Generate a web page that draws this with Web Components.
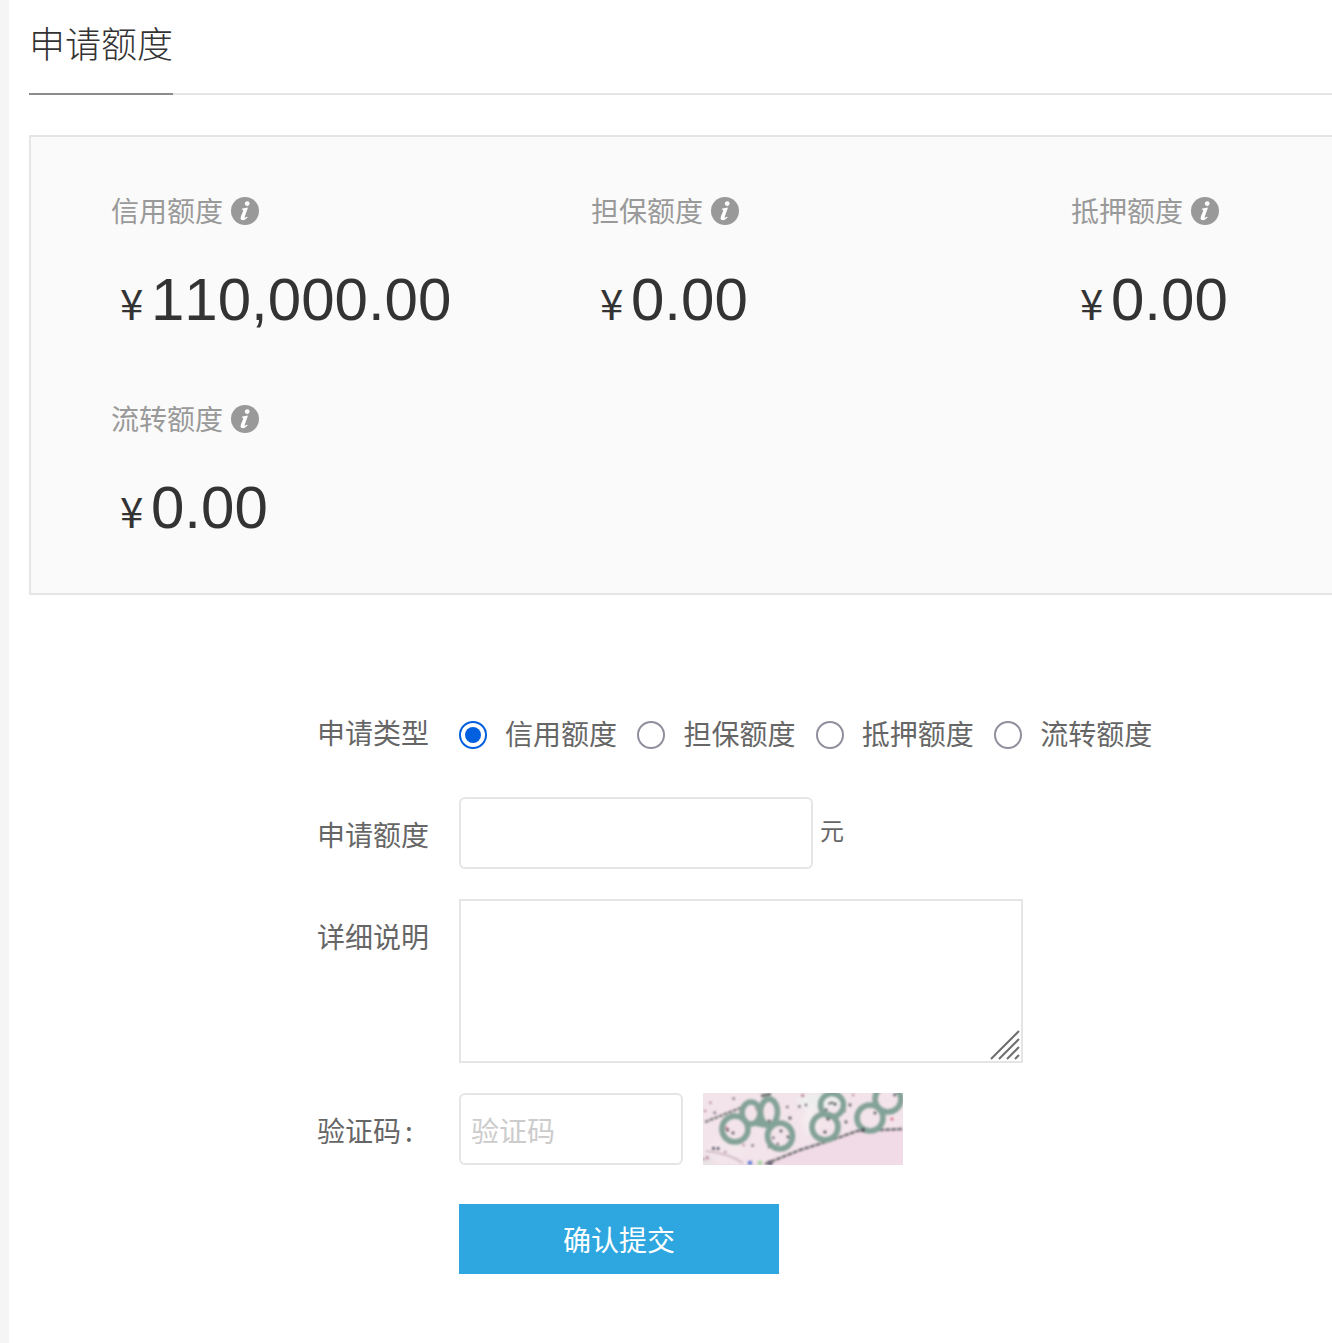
<!DOCTYPE html>
<html lang="zh-CN">
<head>
<meta charset="utf-8">
<title>申请额度</title>
<style>
    html, body { margin: 0; padding: 0; background: #fff; overflow: hidden; }
    body { font-family: "Noto Sans CJK SC", "Liberation Sans", sans-serif; }
</style>
</head>
<body>
<quota-page>
    <page-tab title="申请额度"></page-tab>
    <stat-panel>
        <stat-item label="信用额度" value="110,000.00"></stat-item>
        <stat-item label="担保额度" value="0.00"></stat-item>
        <stat-item label="抵押额度" value="0.00"></stat-item>
        <stat-item label="流转额度" value="0.00"></stat-item>
    </stat-panel>
    <apply-form></apply-form>
</quota-page>

<script>
class QuotaPage extends HTMLElement {
    constructor() {
        super();
        this.root = this.attachShadow({ mode: 'open' });
        this.root.innerHTML = /*html*/`
            <style>
                :host { display: flex; height: 1343px; overflow: hidden; }
                .strip { flex: 0 0 9px; background: #f5f5f5; }
                .main { flex: 1; min-width: 0; padding-left: 20px; overflow: hidden; }
            </style>
            <div class="strip"></div>
            <div class="main"><slot></slot></div>
        `;
    }
}
customElements.define('quota-page', QuotaPage);

class PageTab extends HTMLElement {
    constructor() {
        super();
        this.root = this.attachShadow({ mode: 'open' });
    }
    connectedCallback() {
        this.root.innerHTML = /*html*/`
            <style>
                :host { display: block; height: 95px; border-bottom: 2px solid #e5e5e5; box-sizing: border-box; }
                .tab {
                    display: inline-block;
                    height: 95px;
                    box-sizing: border-box;
                    border-bottom: 2px solid #8c8c8c;
                    font-size: 36px;
                    font-weight: 300;
                    line-height: 84px;
                    color: #333;
                    width: 144px;
                    white-space: nowrap;
                }
            </style>
            <div class="tab">${this.getAttribute('title')}</div>
        `;
    }
}
customElements.define('page-tab', PageTab);

class StatPanel extends HTMLElement {
    constructor() {
        super();
        this.root = this.attachShadow({ mode: 'open' });
        this.root.innerHTML = /*html*/`
            <style>
                :host {
                    display: grid;
                    grid-template-columns: repeat(3, 480px);
                    row-gap: 63px;
                    width: 1340px;
                    box-sizing: border-box;
                    margin-top: 40px;
                    padding: 54px 0 49px 80px;
                    background: #fafafa;
                    border: 2px solid #e5e5e5;
                }
            </style>
            <slot></slot>
        `;
    }
}
customElements.define('stat-panel', StatPanel);

class StatItem extends HTMLElement {
    constructor() {
        super();
        this.root = this.attachShadow({ mode: 'open' });
    }
    connectedCallback() {
        this.root.innerHTML = /*html*/`
            <style>
                :host { display: block; }
                .label {
                    display: flex;
                    align-items: center;
                    gap: 8px;
                    height: 40px;
                    font-size: 28px;
                    color: #999;
                }
                .label span { padding-bottom: 3px; }
                svg { width: 28px; height: 28px; display: block; }
                .value {
                    display: flex;
                    align-items: baseline;
                    height: 72px;
                    margin-top: 33px;
                    padding-left: 9px;
                    line-height: 72px;
                    color: #333;
                }
                .yen { font-size: 42px; width: 31px; }
                .num { font-family: "Liberation Sans", sans-serif; font-size: 60px; font-kerning: none; }
            </style>
            <div class="label">
                <span>${this.getAttribute('label')}</span>
                <svg viewBox="0 0 28 28">
                    <circle cx="14" cy="14" r="14" fill="#999"/>
                    <circle cx="16.2" cy="6.6" r="2.4" fill="#fff"/>
                    <path d="M11.3 11.6 L17 10.5 L13.6 20 Q13.4 21.1 14.5 20.5 L16 19.4 L16.6 20.4 Q13.5 23.6 10.6 23.1 Q9 22.6 9.7 20 L12.4 13.2 L11.2 12.9 Z" fill="#fff"/>
                </svg>
            </div>
            <div class="value"><span class="yen">¥</span><span class="num">${this.getAttribute('value')}</span></div>
        `;
    }
}
customElements.define('stat-item', StatItem);

class RadioOption extends HTMLElement {
    constructor() {
        super();
        this.root = this.attachShadow({ mode: 'open' });
    }
    connectedCallback() {
        const checked = this.hasAttribute('checked');
        this.root.innerHTML = /*html*/`
            <style>
                :host { display: inline-flex; align-items: center; gap: 18px; height: 40px; }
                .dot {
                    width: 28px;
                    height: 28px;
                    box-sizing: border-box;
                    border-radius: 50%;
                    border: 2px solid ${checked ? '#0060df' : '#8f8f9d'};
                    background: #fff;
                    display: grid;
                    place-items: center;
                    margin-top: 2px;
                }
                .dot i { width: 16px; height: 16px; border-radius: 50%; background: #0060df; display: ${checked ? 'block' : 'none'}; }
                .text { padding-bottom: 3px; }
            </style>
            <span class="dot"><i></i></span>
            <span class="text"><slot></slot></span>
        `;
    }
}
customElements.define('radio-option', RadioOption);

class FormRow extends HTMLElement {
    constructor() {
        super();
        this.root = this.attachShadow({ mode: 'open' });
    }
    connectedCallback() {
        this.root.innerHTML = /*html*/`
            <style>
                :host { display: flex; gap: 30px; margin-bottom: var(--row-gap, 30px); }
                .label { flex: 0 0 112px; margin-top: var(--label-top, 17px); line-height: 40px; white-space: nowrap; }
                .field { display: flex; min-width: 0; }
            </style>
            <div class="label"><slot name="label">${this.getAttribute('label') || ''}</slot></div>
            <div class="field"><slot></slot></div>
        `;
    }
}
customElements.define('form-row', FormRow);

class CaptchaImage extends HTMLElement {
    constructor() {
        super();
        this.root = this.attachShadow({ mode: 'open' });
        // noise dots scattered above the curve, fixed sequence so every shot is the same
        let specks = '';
        let seed = 7;
        const next = () => (seed = (seed * 16807) % 2147483647) / 2147483647;
        for (let i = 0; i < 70; i++) {
            const x = next() * 200;
            const y = next() * 72;
            if (y > 70 - x * 0.17 - (x > 100 ? 25 : 0)) continue;
            const c = next() > 0.3 ? '#5f5a66' : '#b87f97';
            specks += `<circle cx="${x.toFixed(1)}" cy="${y.toFixed(1)}" r="${next() > 0.6 ? 1.6 : 1.2}" fill="${c}"/>`;
        }
        this.root.innerHTML = /*html*/`
            <style>
                :host { display: block; width: 200px; height: 72px; }
                svg { display: block; }
            </style>
            <svg width="200" height="72" viewBox="0 0 200 72">
                <defs>
                    <filter id="soft" x="-5%" y="-5%" width="110%" height="110%"><feGaussianBlur stdDeviation="1.1"/></filter>
                    <filter id="wide" x="-5%" y="-5%" width="110%" height="110%"><feGaussianBlur stdDeviation="3"/></filter>
                </defs>
                <rect width="200" height="72" fill="#f1dbe6"/>
                <path d="M0 0 H200 V37 L154 37 Q130 46 97 57 L64 70 L0 72 Z" fill="#f3e3ea"/>
                <g filter="url(#wide)">
                    <ellipse cx="118" cy="8" rx="26" ry="8" fill="#eeeeee"/>
                    <ellipse cx="108" cy="28" rx="8" ry="14" fill="#f4eef0"/>
                    <ellipse cx="24" cy="56" rx="22" ry="10" fill="#f3e7ec"/>
                    <ellipse cx="4" cy="68" rx="6" ry="5" fill="#e4e2e2"/>
                </g>
                <g filter="url(#soft)">
                    ${specks}
                    <path d="M2 29 L40 14" stroke="#7d7f7c" stroke-width="2.4" stroke-dasharray="4 1" fill="none"/>
                    <path d="M58 3 L68 1" stroke="#6f7472" stroke-width="3" fill="none"/>
                    <path d="M62 71 L97 57 Q130 47 154 38 L200 36" stroke="#6f7072" stroke-width="2.4" stroke-dasharray="5 1" fill="none"/>
                    <path d="M3 58 Q25 60 40 70" stroke="#d0bcc5" stroke-width="2" fill="none"/>
                    <g fill="none" stroke="#84a398" stroke-width="5.6">
                        <ellipse cx="32" cy="36" rx="13" ry="13"/>
                        <ellipse cx="48" cy="20" rx="9" ry="11"/>
                        <ellipse cx="66" cy="19" rx="8.5" ry="13"/>
                        <ellipse cx="77" cy="43" rx="12.5" ry="13"/>
                        <path d="M52 30 Q62 32 68 33"/>
                        <ellipse cx="129" cy="12" rx="11.5" ry="11.5"/>
                        <ellipse cx="122" cy="34" rx="13" ry="13"/>
                        <ellipse cx="167" cy="25" rx="13" ry="13"/>
                        <ellipse cx="185" cy="6" rx="13" ry="13"/>
                    </g>
                    <g fill="#55525c">
                        <circle cx="132" cy="11" r="1.6"/><circle cx="125" cy="26" r="1.6"/><circle cx="122" cy="39" r="1.6"/>
                        <circle cx="143" cy="29" r="1.4"/><circle cx="147" cy="12" r="1.4"/><circle cx="172" cy="20" r="1.4"/>
                        <circle cx="30" cy="40" r="1.4"/><circle cx="78" cy="38" r="1.4"/><circle cx="85" cy="44" r="1.4"/>
                        <circle cx="160" cy="37" r="2.2"/><circle cx="87" cy="25" r="1.6"/>
                    </g>
                    <circle cx="47" cy="70" r="2.4" fill="#6d86d8"/>
                    <circle cx="57" cy="70" r="2.4" fill="#a5d8a0"/>
                    <circle cx="67" cy="70" r="2.8" fill="#6f6a7a"/>
                    <circle cx="189" cy="26" r="1.6" fill="#d96b80"/>
                </g>
            </svg>
        `;
    }
}
customElements.define('captcha-image', CaptchaImage);

class ApplyForm extends HTMLElement {
    constructor() {
        super();
        this.root = this.attachShadow({ mode: 'open' });
        this.root.innerHTML = /*html*/`
            <style>
                :host {
                    display: block;
                    margin: 119px 0 0 288px;
                    font-size: 28px;
                    color: #666;
                }
                .radios { display: flex; gap: 20.4px; height: 40px; line-height: 40px; }
                input, textarea {
                    display: block;
                    box-sizing: border-box;
                    border: 2px solid #e5e5e5;
                    background: #fff;
                    outline: none;
                    margin: 0;
                    font: inherit;
                }
                input { height: 72px; border-radius: 6px; padding: 2px 10px 0; }
                input::placeholder { color: #ccc; opacity: 1; }
                .amount { width: 354px; }
                .unit { margin: 13px 0 0 7px; font-size: 24px; line-height: 40px; }
                .code { width: 224px; }
                .text-wrap { position: relative; width: 564px; height: 164px; }
                textarea { width: 564px; height: 164px; resize: none; }
                .grip { position: absolute; right: 3px; bottom: 3px; width: 30px; height: 30px; }
                captcha-image { margin-left: 20px; }
                .colon { margin-left: 4px; }
                button {
                    display: block;
                    width: 320px;
                    height: 70px;
                    border: 0;
                    padding: 0;
                    background: #2ea7e0;
                    color: #fff;
                    font: inherit;
                }
            </style>
            <form-row label="申请类型" style="--label-top:-2px; --row-gap:43px">
                <div class="radios">
                    <radio-option checked>信用额度</radio-option>
                    <radio-option>担保额度</radio-option>
                    <radio-option>抵押额度</radio-option>
                    <radio-option>流转额度</radio-option>
                </div>
            </form-row>
            <form-row label="申请额度">
                <input class="amount" type="text">
                <span class="unit">元</span>
            </form-row>
            <form-row label="详细说明">
                <div class="text-wrap">
                    <textarea></textarea>
                    <svg class="grip" viewBox="0 0 30 30">
                        <path d="M1 29 L29 1 M9 29 L29 9 M17 29 L29 17 M25 29 L29 25" stroke="#6e6e6e" stroke-width="2" fill="none"/>
                    </svg>
                </div>
            </form-row>
            <form-row style="--row-gap:39px">
                <span slot="label">验证码<span class="colon">:</span></span>
                <input class="code" type="text" placeholder="验证码">
                <captcha-image></captcha-image>
            </form-row>
            <form-row style="--label-top:0px">
                <button type="button">确认提交</button>
            </form-row>
        `;
    }
}
customElements.define('apply-form', ApplyForm);
</script>
</body>
</html>
